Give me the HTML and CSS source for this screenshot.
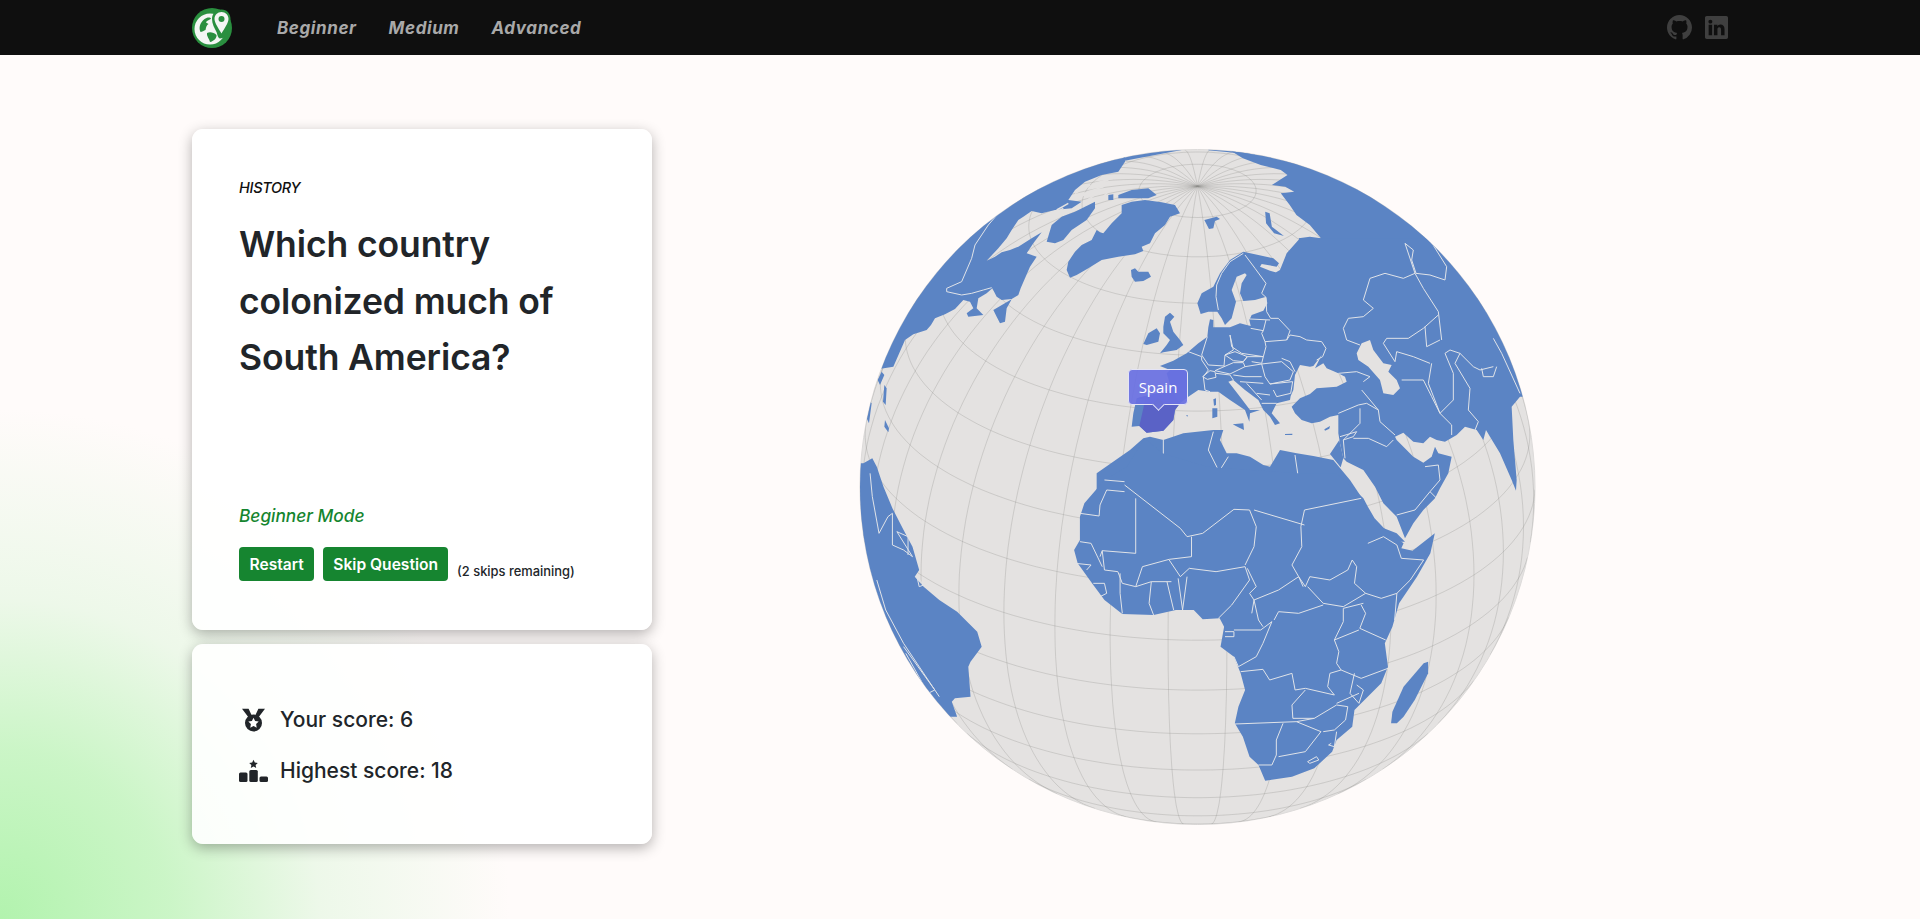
FILE: index.html
```html
<!DOCTYPE html>
<html lang="en">
<head>
<meta charset="utf-8">
<title>Geography Quiz</title>
<link rel="stylesheet" href="styles.css">
</head>
<body>
<nav class="nav">
  <svg class="logo" viewBox="0 0 40 40" aria-label="logo">
    <circle cx="20" cy="20" r="20" fill="#2a8f3f"/>
    <circle cx="18" cy="21" r="15.500" fill="#f4f6f4"/>
    <path class="logo-land" d="M8.500 24c-2.500-5 .5-11.500 6-14 2-.8 4-.5 4.500.5-1.500 2-4 1.500-5 4l2.500 1.500c-2 1-2.500 3.500-3 6-1.500.5-3.500 2-5 2zM15 25c3-1.500 7-.5 9.500 2 .5 3-3 6.500-6.500 7-.5-3-3.500-5.500-3-9z"/>
    <path class="logo-pin" d="M29.500 1.500c-5.500 0-9.500 4.200-9.500 9.500 0 5 2.500 9 4.500 13 1 3 1.500 6 3.500 6.500 3.500-.5 6.500-2 8-5-1-2-1-3 0-6 1.500-3 2.500-6 2.500-8.500 0-5.300-3.500-9.500-9-9.500z"/>
    <path class="logo-pin-in" d="M29.500 4c-4 0-7 3-7 7 0 4 4.500 10 7 14.500 2.500-4.500 7-10.500 7-14.500 0-4-3-7-7-7z"/>
    <circle cx="29.500" cy="11" r="3" fill="#2a8f3f"/>
  </svg>
  <a class="nav-link" href="#">Beginner</a>
  <a class="nav-link" href="#">Medium</a>
  <a class="nav-link" href="#">Advanced</a>
  <div class="nav-icons">
    <svg class="nav-icon gh" viewBox="0 0 16 16"><path d="M8 0C3.58 0 0 3.58 0 8c0 3.54 2.29 6.53 5.47 7.59.4.07.55-.17.55-.38 0-.19-.01-.82-.01-1.49-2.01.37-2.53-.49-2.69-.94-.09-.23-.48-.94-.82-1.13-.28-.15-.68-.52-.01-.53.63-.01 1.08.58 1.23.82.72 1.21 1.87.87 2.33.66.07-.52.28-.87.51-1.07-1.78-.2-3.64-.89-3.64-3.95 0-.87.31-1.59.82-2.15-.08-.2-.36-1.02.08-2.12 0 0 .67-.21 2.2.82.64-.18 1.32-.27 2-.27s1.36.09 2 .27c1.53-1.04 2.2-.82 2.2-.82.44 1.1.16 1.92.08 2.12.51.56.82 1.27.82 2.15 0 3.07-1.87 3.75-3.65 3.95.29.25.54.73.54 1.48 0 1.07-.01 1.93-.01 2.2 0 .21.15.46.55.38A8.01 8.01 0 0 0 16 8c0-4.42-3.58-8-8-8z"/></svg>
    <svg class="nav-icon li" viewBox="0 0 16 16"><path d="M0 1.146C0 .513.526 0 1.175 0h13.65C15.474 0 16 .513 16 1.146v13.708c0 .633-.526 1.146-1.175 1.146H1.175C.526 16 0 15.487 0 14.854V1.146zm4.943 12.248V6.169H2.542v7.225h2.401zm-1.2-8.212c.837 0 1.358-.554 1.358-1.248-.015-.709-.52-1.248-1.342-1.248-.822 0-1.359.54-1.359 1.248 0 .694.521 1.248 1.327 1.248h.016zm4.908 8.212V9.359c0-.216.016-.432.08-.586.173-.431.568-.878 1.232-.878.869 0 1.216.662 1.216 1.634v3.865h2.401V9.25c0-2.22-1.184-3.252-2.764-3.252-1.274 0-1.845.7-2.165 1.193v.025h-.016a5.54 5.54 0 0 1 .016-.025V6.169h-2.4c.03.678 0 7.225 0 7.225h2.4z"/></svg>
  </div>
</nav>

<main class="main">
  <section class="side">
    <div class="card card-question">
      <div>
        <p class="category">HISTORY</p>
        <h1 class="question">Which country colonized much of South America?</h1>
      </div>
      <div>
        <p class="mode">Beginner Mode</p>
        <div class="actions">
          <button class="btn">Restart</button>
          <button class="btn">Skip Question</button>
          <small class="skips">(2 skips remaining)</small>
        </div>
      </div>
    </div>
    <div class="card card-score">
      <div class="score-row">
        <svg class="score-icon" viewBox="0 0 29 24"><path d="M3 .7h6.600l3.400 7.300-3 2zM26 .7h-6.600l-3.400 7.300 3 2z"/><circle cx="14.500" cy="15" r="8.500"/><path class="star" d="M14.500 9.800l1.600 3.300 3.600.5-2.600 2.500.6 3.600-3.200-1.700-3.200 1.700.6-3.600-2.600-2.500 3.600-.5z"/></svg>
        <span>Your score: 6</span>
      </div>
      <div class="score-row">
        <svg class="score-icon" viewBox="0 0 29 24"><rect x="0" y="13.500" width="8.500" height="9.500" rx="1.500"/><rect x="10.300" y="11" width="8.500" height="12" rx="1.500"/><rect x="20.500" y="17.500" width="8.500" height="5.500" rx="1.500"/><path d="M14.500 .8l1.300 2.700 3 .4-2.200 2 .6 3-2.700-1.500-2.700 1.500.6-3-2.200-2 3-.4z"/></svg>
        <span>Highest score: 18</span>
      </div>
    </div>
  </section>

  <div class="globe-wrap">
    <svg class="globe" viewBox="850 130 700 700" width="700" height="700">
      <defs><clipPath id="limb"><circle cx="1197.500" cy="487" r="337.500"/></clipPath></defs>
      <circle class="ocean" cx="1197.500" cy="487" r="337.500"/>
      <g id="graticule" clip-path="url(#limb)"></g>
      <g clip-path="url(#limb)">
        <!-- Americas north, Greenland, North Atlantic islands -->
        <g transform="translate(855 145) scale(.33333)">
          <path class="land" d="M810,50 790,80 740,90 690,110 660,135 640,165 680,170 650,190 600,195 560,205 530,198 505,215 490,225 470,255 455,280 430,310 395,347 420,335 440,322 465,315 490,305 530,280 560,262 535,295 515,325 545,335 525,365 510,400 497,430 490,450 470,462 440,465 425,455 412,430 395,445 370,460 365,490 385,510 340,515 335,505 355,490 345,470 325,465 300,492 270,508 240,520 228,540 215,555 175,568 150,585 115,665 -100,700 -100,-100 810,-100Z"/>
          <path class="land" d="M805,48 980,15 980,-20 805,-20ZM1060,16 1200,29 1200,-20 1060,-20Z"/>
          <path class="land" d="M790,150 830,135 880,130 905,150 880,160 790,160ZM760,150 775,148 775,165 760,165Z"/>
          <path class="land" d="M575,290 590,240 620,215 660,200 690,185 720,170 720,190 695,225 650,255 625,285 600,295Z"/>
          <path class="land" d="M645,398 635,375 640,350 660,320 680,300 710,285 725,255 735,262 745,265 770,235 800,205 800,180 830,170 870,165 920,172 960,180 975,205 945,215 930,240 900,265 885,295 860,305 865,318 840,328 790,335 740,345 700,370 665,390Z"/>
          <path class="land" d="M828,375 840,370 850,380 880,380 888,395 865,408 840,410 830,395Z"/>
          <path class="land" d="M1048,225 1085,215 1095,222 1080,228 1075,250 1062,252Z"/>
          <path class="land" d="M415,495 470,463 455,490 450,530 435,535 425,515Z"/>
          <path class="land" d="M925,545 930,515 945,503 958,515 945,530 955,560 975,585 985,600 965,615 925,622 915,625 935,600 945,585 925,565Z"/>
          <path class="land" d="M865,597 880,565 905,550 915,565 910,590 875,600Z"/>
          <path class="land" d="M80,680 88,690 75,720 68,705ZM88,720 95,730 92,780 84,770ZM90,825 102,850 100,862 88,845ZM35,820 45,770 50,775 42,835Z"/>
          <path class="strait" d="M665,165 700,140 745,125M690,170 720,150 775,135M650,160 690,150M720,115 790,95M700,130 760,105M740,160 770,130M670,150 725,135M660,145 705,120M605,195 640,175M580,215 625,190"/>
          <path class="border" d="M430,205 400,240 360,300 350,340 320,410 275,430 275,440 320,450 350,445 385,435 410,428"/>
        </g>
        <!-- Siberia above the Eurasia tile -->
        <g transform="translate(850 130) scale(.44643 .33333)">
          <path class="land" d="M850,60 880,85 920,105 965,120 980,135 945,165 975,170 995,185 965,190 985,225 1000,255 1030,285 1055,325 1030,320 1005,325 1008,340 1700,340 1700,-50 850,-50Z"/>
          <path class="land" d="M930,245 940,250 945,290 972,318 950,310 932,280Z"/>
        </g>
        <!-- Eurasia and North Africa -->
        <g transform="translate(1130 240) scale(.33333)">
          <path class="land" d="M90,378 130,362 170,340 205,310 232,290 235,262 240,238 250,240 250,262 275,262 300,262 330,250 362,258 358,240 365,225 400,212 412,190 408,170 375,180 340,183 330,160 335,130 350,105 345,100 320,110 305,150 318,185 305,235 285,255 275,235 262,215 235,215 212,222 202,190 215,160 250,140 270,100 300,60 340,35 385,45 430,55 447,70 440,80 395,72 390,80 420,92 447,100 435,107 415,110 450,90 470,40 510,-5 1300,-5 1300,470 1170,470 1145,500 1150,600 1160,720 1158,752 1145,720 1110,640 1080,590 1068,570 1060,600 1040,570 1005,560 980,585 945,605 920,600 900,590 880,610 850,605 820,578 795,590 800,600 850,650 880,668 905,650 915,620 925,640 965,650 955,700 930,745 915,775 880,810 850,850 825,895 800,830 760,790 735,740 700,690 650,665 640,655 630,610 625,580 625,525 600,530 570,545 545,550 515,540 495,520 485,500 510,475 540,462 560,445 620,440 650,425 645,410 625,400 590,385 580,370 555,385 575,345 550,378 540,380 510,375 495,405 490,450 482,468 480,480 440,490 425,520 450,550 435,555 420,530 400,510 385,480 345,450 310,420 295,425 330,470 360,510 390,510 360,520 358,545 345,510 300,480 265,455 240,455 205,450 175,470 150,490 135,510 130,540 100,572 50,578 28,558 5,560 10,520 20,475 60,465 125,450 110,400 120,390Z"/>
          <path class="land" d="M610,660 550,648 500,640 450,630 420,680 400,675 360,650 320,640 290,640 270,600 280,570 250,570 160,580 100,600 60,590 40,595 0,630 -100,700 -100,905 825,905 800,880 750,860 715,830 700,780 660,720Z"/>
          <path class="land" d="M600,642 628,600 640,655 632,682 612,657Z"/>
          <path class="land" d="M308,553 340,550 342,570 325,562ZM247,505 262,505 262,530 247,535ZM250,478 258,475 258,495 252,497ZM465,582 487,581 487,585 465,585ZM583,568 600,558 598,566 585,572ZM168,526 174,526 172,530Z"/>
          <path class="water" d="M680,340 695,310 720,300 730,330 760,370 785,375 775,395 800,420 810,445 790,465 760,460 750,420 715,380 685,360Z"/>
          <path class="highlight" d="M20,475 60,465 125,450 150,490 135,510 130,540 100,572 50,578 28,558 40,505 45,480Z"/>
          <path class="border" d="M340,40 300,65 275,100 260,135 258,170 265,210M345,45 375,85 408,130 395,160 408,172 410,215 422,235 445,235 480,272 470,300M360,237 420,240M362,265 400,272 395,280 405,305 470,300 480,285 510,290 530,300 575,305 588,325 578,350 560,360M408,240 400,272"/>
          <path class="border" d="M300,285 305,320 335,340 400,350 408,320 405,305M232,290 215,345 235,375 282,378 285,345 310,330 300,285M285,345 315,335 352,350 340,365 310,362 285,345M340,365 352,350 400,350 395,370 365,365M255,392 310,368 340,368 345,380 300,402 255,392M345,380 395,372 455,365 490,395 480,420 420,432 405,410 395,372M455,355 480,365 495,395M420,432 488,425 482,460 440,470 430,450"/>
          <path class="border" d="M175,335 215,350 215,360 235,390 220,410 225,450 240,455M218,410 240,392 255,395 258,412 232,418 218,410M258,400 300,405 310,420M310,405 345,410 395,410M330,425 400,430M350,430 395,480M380,460 420,465M395,490 440,490"/>
          <path class="border" d="M625,400 680,395 720,410 700,425M640,265 655,235 700,230 730,205 700,180 720,115 765,100 820,115 855,100 880,145 925,215 935,300M640,265 650,300 690,315M855,100 825,10 850,30 845,60 858,100 900,105 945,120 950,80 900,0M760,310 770,295 835,295 880,265 925,225M885,260 890,320 930,300M760,310 795,365 800,335 850,350 900,370"/>
          <path class="border" d="M695,450 745,510 750,545 795,585M815,420 880,420 905,470 930,520 965,555 965,585M905,370 895,430 930,520 970,480 970,400 945,340 960,330 990,340 975,370 1020,445 1015,510 1045,545 1035,570M990,340 1030,380 1050,390 1090,380M1055,385 1060,410 1090,410 1100,380M1090,295 1115,340 1170,460"/>
          <path class="border" d="M625,520 685,495 710,490 745,510M690,505 690,550 640,600M630,590 680,575 670,590 640,600 645,655M670,595 715,595 770,620 790,600M800,825 855,810 900,755 925,780M900,755 930,720 925,675 885,680"/>
          <path class="border" d="M495,645 520,815 525,855M525,810 690,775M250,575 235,630 265,690M295,650 270,690 270,765 310,805M100,600 100,655 70,660 0,700M0,745 100,820 180,888M310,805 240,850 180,888M310,805 345,820 375,805 515,855M365,815 378,855"/>
        </g>
        <!-- Africa, South America, Madagascar -->
        <g transform="translate(850 430) scale(.44643 .33333)">
          <path class="land" d="M660,25 700,70 800,110 1000,130 1090,130 1150,205 1160,230 1175,265 1200,300 1240,340 1235,355 1260,362 1310,310 1300,370 1270,440 1230,520 1215,590 1198,640 1205,710 1190,760 1130,840 1125,890 1090,930 1080,965 1040,1015 990,1040 930,1052 915,1005 895,980 880,920 862,880 870,830 885,780 875,730 860,680 830,650 838,590 828,565 790,568 770,540 730,540 680,555 610,552 570,510 545,465 510,400 502,360 515,330 515,260 525,220 570,150 620,110Z"/>
          <path class="land" d="M1212,880 1215,845 1240,770 1285,700 1295,695 1295,730 1265,810 1240,860 1225,880Z"/>
          <path class="land" d="M30,100 50,85 60,110 75,170 95,235 120,300 140,350 155,420 145,440 165,470 200,510 240,545 285,605 295,650 270,695 265,710 270,800 235,805 228,815 240,860 0,860 0,100Z"/>
          <path class="border" d="M570,150 615,155M575,180 615,185M560,225 575,180M515,250 558,258 560,225M615,165 740,295 755,320 790,310 860,238 895,240 910,290 905,350 885,405M640,205 640,370 565,362 560,380M765,320 765,380 715,388 655,410 640,470M715,390 740,440 760,415 820,425 885,410"/>
          <path class="border" d="M905,240 1018,285M1018,240 1010,290 1012,350 990,405 1005,440 1015,470M1018,240 1145,205M1005,440 960,480 905,510 915,570 925,590M885,410 895,450 855,525 825,565M890,415 910,470 895,490 905,510 900,550M950,570 960,545 1005,550 1060,525M1005,440 1020,470 1030,440 1075,450 1115,420 1125,390 1135,410 1130,460 1155,490 1105,530 1060,520 1025,470"/>
          <path class="border" d="M1160,340 1195,320 1225,345 1235,385 1285,390 1255,450 1225,490 1190,505 1155,490M1225,490 1220,570M1145,525 1155,550 1142,595 1200,630M1105,535 1105,575 1085,630 1095,665 1090,700 1100,720M1105,535 1150,520M1085,630 1140,600M1100,720 1145,745 1205,715M875,725 925,718 940,750 990,730 997,780 1020,775 1085,795 1070,770 1075,730 1100,720"/>
          <path class="border" d="M862,882 1000,875 1040,865M970,880 955,930 955,975 945,1005 915,1005M1000,875 1055,905 1020,965 960,980M1040,865 1090,825 1115,830 1110,870 1085,900 1060,905M1020,780 990,825 992,865 1040,865M1090,820 1140,790M1130,730 1120,790 1140,820 1150,780 1135,765M1025,995 1045,980 1050,990 1030,1000 1025,995M1090,905 1085,950 1072,945 1078,940"/>
          <path class="border" d="M840,605 860,605 860,620 840,620M860,600 920,600 945,575 925,640 910,680 870,710 860,680M515,335 540,340 565,410M505,400 540,405 530,420M545,460 570,460 575,490 560,500M605,430 605,490 610,550M675,455 670,520 680,555M710,455 725,540M735,445 745,540 755,440M565,362 570,420 600,425 610,460 640,470 675,455 720,455"/>
          <path class="border" d="M45,130 50,200 65,310 85,260 95,250 95,345 120,360 140,380 105,305 130,320 130,375M60,450 80,540 120,640 185,770 200,800M120,650 190,780 175,790 125,670M150,440 165,465 155,470 150,440"/>
        </g>
      </g>
    </svg>
    <div class="tooltip">Spain</div>
  </div>
</main>
<script src="graticule.js"></script>
</body>
</html>
```

FILE: styles.css
```css
* { box-sizing: border-box; }
html, body { margin: 0; height: 100%; }
body {
  min-height: 919px;
  overflow: hidden;
  color: #212529;
  font-family: "Inter", "Noto Sans", sans-serif;
  background: radial-gradient(circle at 0 100%, #b2f3ae 0, rgba(190,244,186,.8) 170px, rgba(225,246,222,.6) 320px, rgba(255,251,250,0) 510px), #fffbfa;
}
.nav {
  height: 55px;
  background: #0f0f0f;
  display: flex;
  align-items: center;
  padding: 0 192px 0 192px;
}
.logo { width: 40px; height: 40px; margin-right: 45px; flex: none; }
.logo-land { fill: #2a8f3f; }
.logo-pin { fill: #2a8f3f; }
.logo-pin-in { fill: #f4f6f4; }
.nav-link {
  font-family: "Inter", sans-serif;
  font-style: italic;
  font-weight: 700;
  font-size: 17px;
  letter-spacing: .6px;
  color: #a9a9a9;
  text-decoration: none;
  margin-right: 32px;
}
.nav-icons { margin-left: auto; display: flex; align-items: center; gap: 13px; }
.nav-icon { display: block; fill: #3f3f3f; }
.gh { width: 25px; height: 25px; }
.li { width: 23px; height: 23px; }

.main { display: flex; padding: 74px 0 0 192px; gap: 198px; }
.side { width: 460px; display: flex; flex-direction: column; gap: 14px; flex: none; }
.card {
  background: rgba(255,255,255,.9);
  border-radius: 11px;
  box-shadow: 0 4px 14px rgba(0,0,0,.3);
  padding: 48px;
}
.card-question {
  height: 501px;
  display: flex;
  flex-direction: column;
  justify-content: space-between;
  padding: 50px 47px 49px 47px;
}
.category { margin: 0; font-size: 14.500px; line-height: 18px; font-style: italic; font-weight: 500; color: #111; letter-spacing: -.3px; }
.question { margin: 20px 0 0; font-size: 35.500px; line-height: 56.500px; font-weight: 600; letter-spacing: -.1px; }
.mode { margin: 0 0 19px; font-size: 17.300px; line-height: 24px; font-style: italic; font-weight: 500; color: #15852f; }
.actions { display: flex; align-items: flex-end; gap: 9px; }
.btn {
  border: 0;
  height: 34px;
  padding: 0 10px;
  border-radius: 4px;
  background: #168530;
  color: #fff;
  font: 600 15.600px "Inter", sans-serif;
}
.btn:first-child { padding: 0 10.500px; }
.skips { font-size: 12.900px; line-height: 16px; margin-bottom: 1px; font-weight: 500; }
.card-score {
  height: 200px;
  display: flex;
  flex-direction: column;
  justify-content: center;
  gap: 20px;
  padding: 22px 48px 20px 47px;
  font-size: 21px;
  font-weight: 500;
}
.score-row { display: flex; align-items: center; gap: 12px; line-height: 31px; }
.score-icon { width: 29px; height: 24px; fill: #212529; flex: none; }
.score-icon .star { fill: #fff; }

.globe-wrap { position: relative; width: 700px; height: 700px; margin-top: 1px; flex: none; }
.globe { display: block; }
.ocean { fill: #e4e2e1; stroke: #dddbda; stroke-width: 1; }
.grat { fill: none; stroke: #8f8d8b; stroke-opacity: .42; stroke-width: .7; }
.land { fill: #5b84c4; }
.water { fill: #e4e2e1; }
.highlight { fill: #5a62c6; }
.border { fill: none; stroke: #e0e3e8; stroke-width: 1; vector-effect: non-scaling-stroke; stroke-linejoin: round; }
.strait { fill: none; stroke: #e4e2e1; stroke-width: 1.500; vector-effect: non-scaling-stroke; }
.tooltip {
  position: absolute;
  left: 278px;
  top: 239px;
  width: 60px;
  height: 36px;
  background: rgba(105,112,226,.92);
  border: 1px solid #e4e4f6;
  border-radius: 4px;
  color: #fff;
  font: 15px/34px "Open Sans", sans-serif;
  text-align: center;
}
.tooltip::after {
  content: "";
  position: absolute;
  left: 25px;
  bottom: -5px;
  width: 8px;
  height: 8px;
  background: #6970d8;
  border-right: 1px solid #e4e4f6;
  border-bottom: 1px solid #e4e4f6;
  transform: rotate(45deg);
}
```

FILE: graticule.js
```js
// Draws the 10-degree graticule of the globe in orthographic projection.
(function () {
  var CX = 1197.5, CY = 487, R = 337.5;
  var LAT0 = 27 * Math.PI / 180, LON0 = 5 * Math.PI / 180;
  var rad = Math.PI / 180;

  function project(lat, lon) {
    var p = lat * rad, l = lon * rad - LON0;
    var vis = Math.sin(LAT0) * Math.sin(p) + Math.cos(LAT0) * Math.cos(p) * Math.cos(l);
    return {
      x: CX + R * Math.cos(p) * Math.sin(l),
      y: CY - R * (Math.cos(LAT0) * Math.sin(p) - Math.sin(LAT0) * Math.cos(p) * Math.cos(l)),
      vis: vis >= 0
    };
  }

  function line(points) {
    var d = "", pen = false;
    points.forEach(function (q) {
      if (!q.vis) { pen = false; return; }
      d += (pen ? "L" : "M") + q.x.toFixed(1) + " " + q.y.toFixed(1);
      pen = true;
    });
    return d;
  }

  var d = "", i, k, pts;
  for (i = -180; i < 180; i += 10) {
    pts = [];
    for (k = -90; k <= 90; k += 2) pts.push(project(k, i));
    d += line(pts);
  }
  for (i = -80; i <= 80; i += 10) {
    pts = [];
    for (k = -180; k <= 180; k += 2) pts.push(project(i, k));
    d += line(pts);
  }

  var path = document.createElementNS("http://www.w3.org/2000/svg", "path");
  path.setAttribute("class", "grat");
  path.setAttribute("d", d);
  document.getElementById("graticule").appendChild(path);
})();
```
